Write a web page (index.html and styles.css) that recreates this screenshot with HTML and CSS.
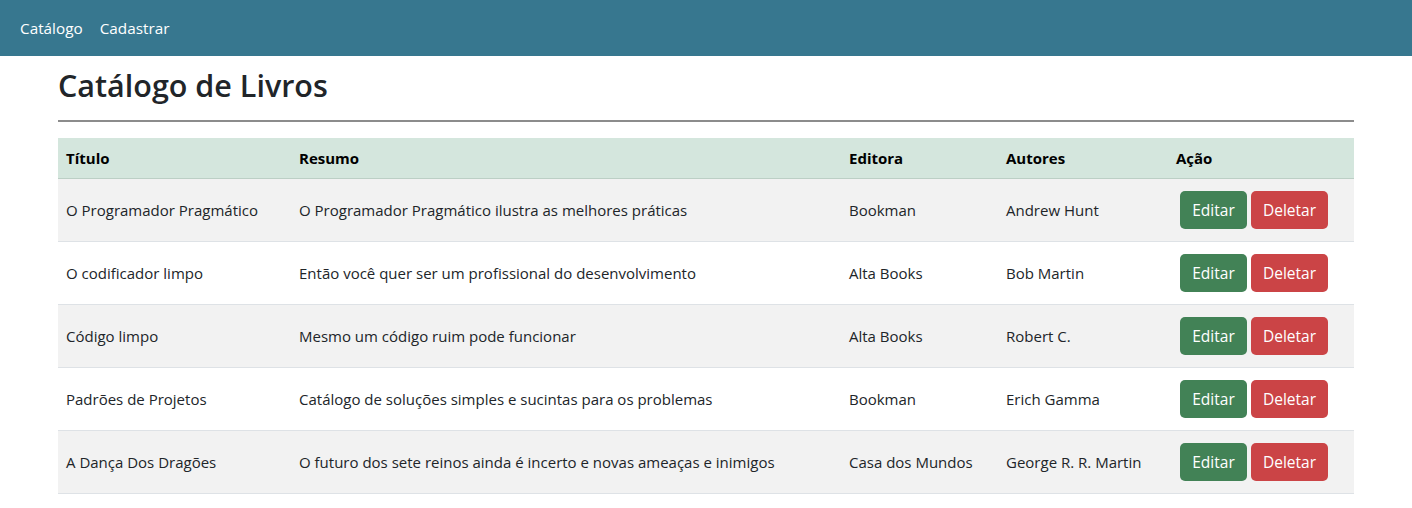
FILE: index.html
```html
<!DOCTYPE html>
<html lang="pt-BR">
<head>
<meta charset="utf-8">
<title>Catálogo de Livros</title>
<link rel="stylesheet" href="styles.css">
</head>
<body>
<nav class="navbar">
  <a class="nav-link" href="#">Catálogo</a>
  <a class="nav-link" href="#">Cadastrar</a>
</nav>
<main class="container">
  <h2 class="title">Catálogo de Livros</h2>
  <hr class="divider">
  <table class="books">
    <thead>
      <tr>
        <th class="c-titulo">Título</th>
        <th class="c-resumo">Resumo</th>
        <th class="c-editora">Editora</th>
        <th class="c-autores">Autores</th>
        <th class="c-acao">Ação</th>
      </tr>
    </thead>
    <tbody>
      <tr>
        <td>O Programador Pragmático</td>
        <td>O Programador Pragmático ilustra as melhores práticas</td>
        <td>Bookman</td>
        <td>Andrew Hunt</td>
        <td class="actions"><div class="btns"><button class="btn btn-edit">Editar</button><button class="btn btn-del">Deletar</button></div></td>
      </tr>
      <tr>
        <td>O codificador limpo</td>
        <td>Então você quer ser um profissional do desenvolvimento</td>
        <td>Alta Books</td>
        <td>Bob Martin</td>
        <td class="actions"><div class="btns"><button class="btn btn-edit">Editar</button><button class="btn btn-del">Deletar</button></div></td>
      </tr>
      <tr>
        <td>Código limpo</td>
        <td>Mesmo um código ruim pode funcionar</td>
        <td>Alta Books</td>
        <td>Robert C.</td>
        <td class="actions"><div class="btns"><button class="btn btn-edit">Editar</button><button class="btn btn-del">Deletar</button></div></td>
      </tr>
      <tr>
        <td>Padrões de Projetos</td>
        <td>Catálogo de soluções simples e sucintas para os problemas</td>
        <td>Bookman</td>
        <td>Erich Gamma</td>
        <td class="actions"><div class="btns"><button class="btn btn-edit">Editar</button><button class="btn btn-del">Deletar</button></div></td>
      </tr>
      <tr>
        <td>A Dança Dos Dragões</td>
        <td>O futuro dos sete reinos ainda é incerto e novas ameaças e inimigos</td>
        <td>Casa dos Mundos</td>
        <td>George R. R. Martin</td>
        <td class="actions"><div class="btns"><button class="btn btn-edit">Editar</button><button class="btn btn-del">Deletar</button></div></td>
      </tr>
    </tbody>
  </table>
</main>
</body>
</html>
```
FILE: styles.css
```css
* { box-sizing: border-box; }
html, body {
  margin: 0;
  padding: 0;
  background: #fff;
  color: #212529;
  font-family: "Open Sans", "Noto Sans", sans-serif;
  font-size: 15px;
  line-height: 24px;
}
.navbar {
  height: 56px;
  background: #37778f;
  display: flex;
  align-items: center;
  gap: 17px;
  padding: 0 20px;
}
.nav-link {
  color: #fff;
  text-decoration: none;
  font-size: 15.3px;
}
.container {
  width: 1296px;
  margin: 0 auto;
  padding-top: 10px;
}
.title {
  margin: 0 0 16px;
  font-size: 30.5px;
  font-weight: 600;
  line-height: 38px;
  color: #212529;
}
.divider {
  margin: 0 0 16px;
  border: 0;
  border-top: 2px solid #8c8c8c;
  height: 0;
}
.books {
  width: 100%;
  border-collapse: collapse;
  table-layout: fixed;
}
.books th {
  background: #d4e6dd;
  text-align: left;
  font-weight: 700;
  color: #000;
  padding: 8px 8px;
  border-bottom: 1px solid #bccfc5;
}
.books td {
  padding: 12px 8px;
  border-bottom: 1px solid #dee2e6;
  vertical-align: middle;
  height: 63px;
}
.books tbody tr:nth-child(odd) td { background: #f2f2f2; }
.c-titulo { width: 233px; }
.c-resumo { width: 550px; }
.c-editora { width: 157px; }
.c-autores { width: 170px; }
.c-acao { width: 186px; }
.books td.actions { padding-left: 12px; }
.btns { display: flex; gap: 4px; }
.btn {
  font-family: inherit;
  font-size: 15.5px;
  line-height: 24px;
  height: 38px;
  padding: 0 12px;
  border: 0;
  border-radius: 5px;
  color: #fff;
  cursor: pointer;
}
.btn-edit { background: #428256; width: 67px; }
.btn-del { background: #cb4446; width: 77px; }
```
